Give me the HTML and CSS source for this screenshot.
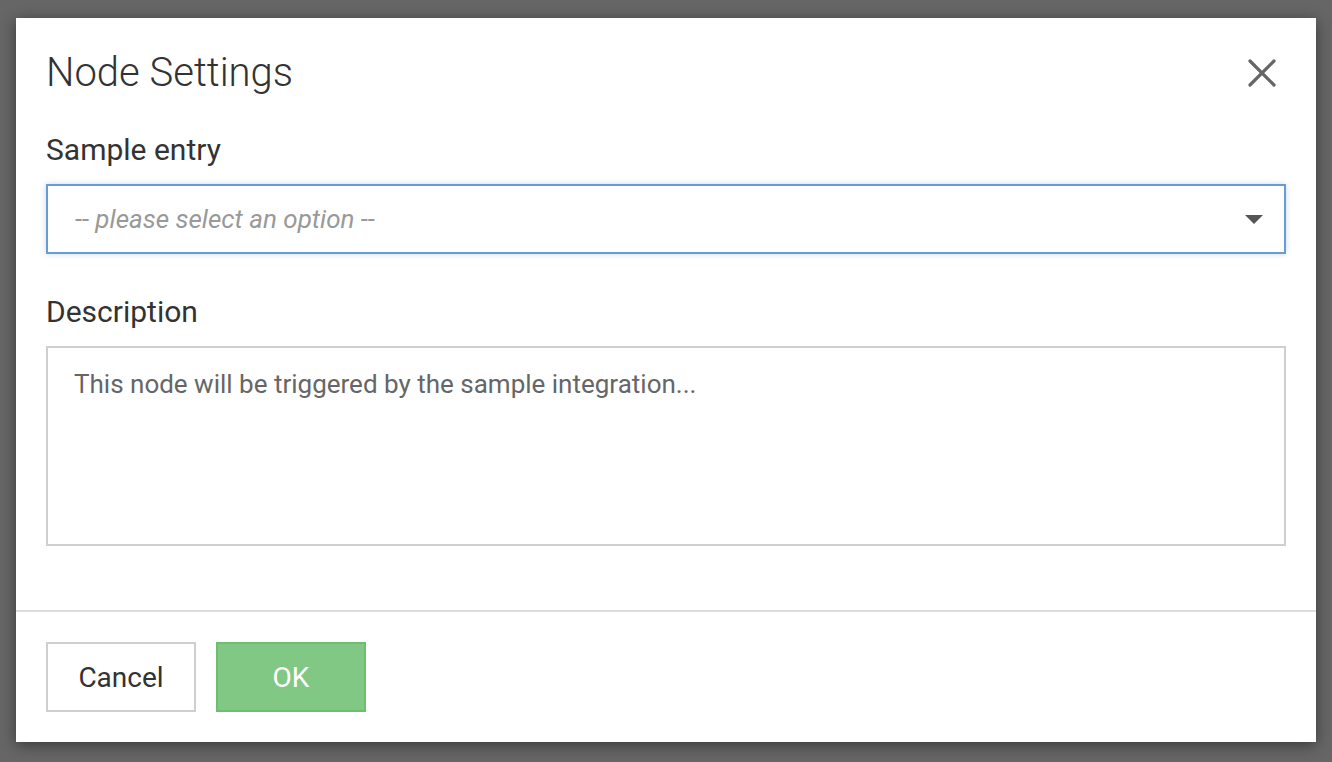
FILE: index.html
```html
<!DOCTYPE html>
<html>
<head>
<meta charset="utf-8">
<link rel="stylesheet" href="styles.css">
</head>
<body>
<div class="dialog">
  <div class="dialog-body">
    <div class="header">
      <h1 class="title">Node Settings</h1>
      <button class="close" aria-label="Close">
        <svg width="28" height="28" viewBox="0 0 28 28"><path d="M2 2 L26 26 M26 2 L2 26" stroke="#666" stroke-width="3.2" stroke-linecap="round" fill="none"/></svg>
      </button>
    </div>
    <label class="label label-first">Sample entry</label>
    <div class="select">
      <span class="placeholder">-- please select an option --</span>
      <span class="caret"></span>
    </div>
    <label class="label label-second">Description</label>
    <div class="textarea">This node will be triggered by the sample integration...</div>
  </div>
  <div class="footer">
    <button class="btn btn-cancel">Cancel</button>
    <button class="btn btn-ok">OK</button>
  </div>
</div>
</body>
</html>
```
FILE: styles.css
```css
html, body {
  margin: 0;
  padding: 0;
}
body {
  background: #666666;
  width: 1332px;
  height: 762px;
  overflow: hidden;
  font-family: Roboto, "Liberation Sans", sans-serif;
  padding-top: 18px;
  padding-left: 16px;
  box-sizing: border-box;
}
.dialog {
  width: 1300px;
  height: 724px;
  background: #fff;
  box-shadow: 0 3px 14px rgba(0,0,0,0.45);
  display: flex;
  flex-direction: column;
}
.dialog-body {
  flex: 1;
  padding: 30px 30px 0 30px;
  display: flex;
  flex-direction: column;
}
.header {
  display: flex;
  justify-content: space-between;
  align-items: center;
  height: 48px;
  padding-top: 1px;
}
.title {
  margin: 0;
  font-size: 40px;
  font-weight: 300;
  line-height: 48px;
  color: #333;
}
.close {
  width: 48px;
  height: 48px;
  border: 0;
  background: none;
  padding: 0;
  display: flex;
  align-items: center;
  justify-content: center;
}
.label {
  display: block;
  font-size: 30px;
  line-height: 36px;
  color: #333;
}
.label-first {
  margin-top: 35px;
}
.label-second {
  margin-top: 40px;
}
.select {
  margin-top: 16px;
  height: 70px;
  box-sizing: border-box;
  border: 2px solid #6b9bd3;
  box-shadow: 0 0 6px rgba(102,153,210,0.35);
  display: flex;
  align-items: center;
  justify-content: space-between;
  padding: 0 21px 0 27px;
}
.placeholder {
  font-size: 26px;
  font-style: italic;
  color: #999;
}
.caret {
  width: 0;
  height: 0;
  border-left: 9px solid transparent;
  border-right: 9px solid transparent;
  border-top: 9px solid #555;
}
.textarea {
  margin-top: 16px;
  height: 200px;
  box-sizing: border-box;
  border: 2px solid #ccd0cf;
  padding: 20px 27px 20px 26px;
  font-size: 26px;
  line-height: 32px;
  color: #666;
}
.footer {
  border-top: 2px solid #dddddd;
  padding: 30px 30px;
  display: flex;
  gap: 20px;
}
.btn {
  width: 150px;
  height: 70px;
  box-sizing: border-box;
  font-family: Roboto, "Liberation Sans", sans-serif;
  font-size: 28px;
  padding: 0;
  cursor: pointer;
}
.btn-cancel {
  background: #fff;
  border: 2px solid #ccd0cf;
  color: #333;
}
.btn-ok {
  background: #81c884;
  border: 2px solid #6cbf6f;
  color: #fff;
}
```
